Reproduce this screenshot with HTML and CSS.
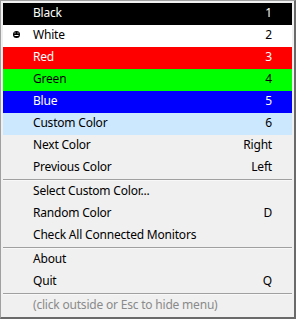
FILE: index.html
```html
<!DOCTYPE html>
<html>
<head>
<meta charset="utf-8">
<link rel="stylesheet" href="styles.css">
</head>
<body>
<div class="menu">
  <div class="item c-black"><span class="label">Black</span><span class="key">1</span></div>
  <div class="item c-white"><span class="check"><svg width="7" height="7" viewBox="0 0 7 7"><circle cx="3.5" cy="3.5" r="3.5" fill="#000"/><rect x="1.5" y="1.5" width="1" height="1" fill="#fff"/><rect x="4.5" y="1.5" width="1" height="1" fill="#fff"/><rect x="1.5" y="4" width="4" height="1" fill="#fff"/></svg></span><span class="label">White</span><span class="key">2</span></div>
  <div class="item c-red"><span class="label">Red</span><span class="key">3</span></div>
  <div class="item c-green"><span class="label">Green</span><span class="key">4</span></div>
  <div class="item c-blue"><span class="label">Blue</span><span class="key">5</span></div>
  <div class="item c-custom"><span class="label">Custom Color</span><span class="key">6</span></div>
  <div class="item"><span class="label">Next Color</span><span class="key">Right</span></div>
  <div class="item"><span class="label">Previous Color</span><span class="key">Left</span></div>
  <div class="sep"></div>
  <div class="item"><span class="label">Select Custom Color...</span><span class="key"></span></div>
  <div class="item"><span class="label">Random Color</span><span class="key">D</span></div>
  <div class="item"><span class="label">Check All Connected Monitors</span><span class="key"></span></div>
  <div class="sep"></div>
  <div class="item"><span class="label">About</span><span class="key"></span></div>
  <div class="item"><span class="label">Quit</span><span class="key">Q</span></div>
  <div class="sep"></div>
  <div class="item hint"><span class="label">(click outside or Esc to hide menu)</span></div>
</div>
</body>
</html>
```
FILE: styles.css
```css
html, body {
  margin: 0;
  padding: 0;
  background: #f0f0f0;
}
.menu {
  width: 296px;
  height: 319px;
  box-sizing: border-box;
  background: #f0f0f0;
  border-left: 1px solid #a0a0a0;
  border-top: 1px solid #a0a0a0;
  border-right: 2px solid #6a6a6a;
  border-bottom: 2px solid #6a6a6a;
  padding: 2px 2px 0 2px;
  font-family: "Noto Sans", sans-serif;
  font-size: 12px;
  letter-spacing: -0.2px;
  color: #000;
  display: flex;
  flex-direction: column;
}
.item {
  height: 22px;
  box-sizing: border-box;
  display: flex;
  align-items: center;
  padding: 0 20px 4px 30px;
  position: relative;
  flex-shrink: 0;
}
.label {
  flex: 1;
  white-space: nowrap;
}
.key {
  white-space: nowrap;
}
.check {
  position: absolute;
  left: 10px;
  top: 6px;
  width: 7px;
  height: 7px;
  display: flex;
}
.c-black { background: #000; color: #fff; }
.c-white { background: #fff; color: #000; }
.c-red { background: #ff0000; color: #fff; }
.c-green { background: #00ff00; color: #000; }
.c-blue { background: #0000ff; color: #fff; }
.c-custom { background: #cce8ff; color: #000; }
.sep {
  height: 1px;
  background: #a0a0a0;
  border-bottom: 1px solid #f8f8f8;
  flex-shrink: 0;
}
.hint { color: #8a8a8a; }
```
